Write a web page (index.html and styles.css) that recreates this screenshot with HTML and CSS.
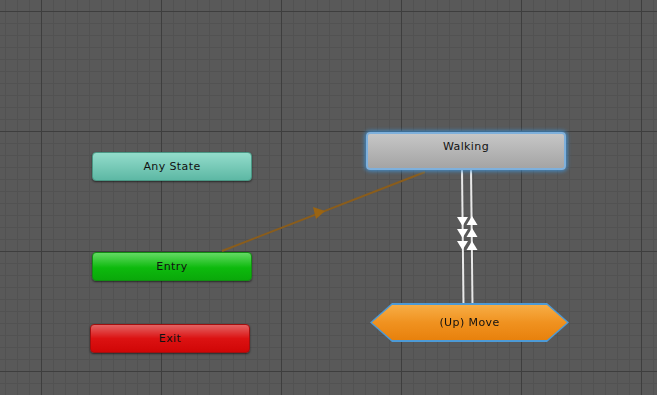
FILE: index.html
```html
<!DOCTYPE html>
<html lang="en">
<head>
  <meta charset="UTF-8" />
  <title>Animator</title>
  <link rel="stylesheet" href="styles.css">
</head>
<body>
  <div class="graph">
    <!-- Transitions -->
    <svg class="links" width="657" height="395" viewBox="0 0 657 395">
      <line x1="222" y1="251" x2="425" y2="172" stroke="#8a5d1c" stroke-width="2"/>
      <polygon points="325,211 313,207 316,219" fill="#9a6412"/>
      <line x1="462" y1="170" x2="463.5" y2="305" stroke="#e8e8e8" stroke-width="2"/>
      <line x1="471" y1="170" x2="472.5" y2="305" stroke="#e8e8e8" stroke-width="2"/>
      <polygon points="457,217 468,217 462.5,226" fill="#fff"/>
      <polygon points="457,229 468,229 462.5,238" fill="#fff"/>
      <polygon points="457,241 468,241 462.5,250" fill="#fff"/>
      <polygon points="472,216 466.5,225 477.5,225" fill="#fff"/>
      <polygon points="472,228 466.5,237 477.5,237" fill="#fff"/>
      <polygon points="472,241 466.5,250 477.5,250" fill="#fff"/>
    </svg>

    <!-- States -->
    <div class="node any-state">Any State</div>
    <div class="node entry">Entry</div>
    <div class="node exit">Exit</div>
    <div class="node walking">Walking</div>
    <div class="move-wrap">
      <div class="move">(Up) Move</div>
    </div>
  </div>
</body>
</html>
```

FILE: styles.css
```css
body {
  margin: 0;
  overflow: hidden;
  font-family: "DejaVu Sans", Verdana, sans-serif;
}
.graph {
  position: relative;
  width: 657px;
  height: 395px;
  background-color: #595959;
  background-image:
    linear-gradient(to right, #3e3e3e 1px, transparent 1px),
    linear-gradient(to bottom, #3e3e3e 1px, transparent 1px),
    linear-gradient(to right, #525252 1px, transparent 1px),
    linear-gradient(to bottom, #525252 1px, transparent 1px);
  background-size: 120px 120px, 120px 120px, 12px 12px, 12px 12px;
  background-position: 41px 0, 0 11px, 5px 0, 0 11px;
}
.links {
  position: absolute;
  left: 0;
  top: 0;
}
.node {
  position: absolute;
  width: 160px;
  height: 29px;
  box-sizing: border-box;
  border-radius: 4px;
  display: flex;
  align-items: center;
  justify-content: center;
  font-size: 11px;
  letter-spacing: 0.4px;
  color: #111;
  box-shadow: 0 1px 2px rgba(0, 0, 0, 0.55);
}
.any-state {
  left: 92px;
  top: 152px;
  background: linear-gradient(#93dccb, #5db8a4);
  border: 1px solid #4a9784;
}
.entry {
  left: 92px;
  top: 252px;
  background: linear-gradient(#63da63, #0dba0d 55%, #0aa80a);
  border: 1px solid #138c13;
}
.exit {
  left: 90px;
  top: 324px;
  background: linear-gradient(#e36363, #dc1212 50%, #d00606);
  border: 1px solid #a01010;
}
.walking {
  left: 366px;
  top: 132px;
  width: 200px;
  height: 38px;
  padding-bottom: 10px;
  background: linear-gradient(#c6c6c6, #a4a4a4);
  border: 2px solid #7eb0dc;
  box-shadow: 0 0 4px 1px #3f8fd0;
}
.move-wrap {
  position: absolute;
  left: 370px;
  top: 303px;
  width: 199px;
  height: 39px;
  background: #4d9ad6;
  clip-path: polygon(22px 0, 177px 0, 199px 19.5px, 177px 39px, 22px 39px, 0 19.5px);
  filter: drop-shadow(0 0 2px #3f8fd0);
}
.move {
  position: absolute;
  left: 2px;
  top: 2px;
  width: 195px;
  height: 35px;
  background: linear-gradient(#f7ad45, #f09220 50%, #e8810c);
  clip-path: polygon(20px 0, 175px 0, 195px 17.5px, 175px 35px, 20px 35px, 0 17.5px);
  display: flex;
  align-items: center;
  justify-content: center;
  font-size: 11px;
  letter-spacing: 0.4px;
  color: #111;
}
```
